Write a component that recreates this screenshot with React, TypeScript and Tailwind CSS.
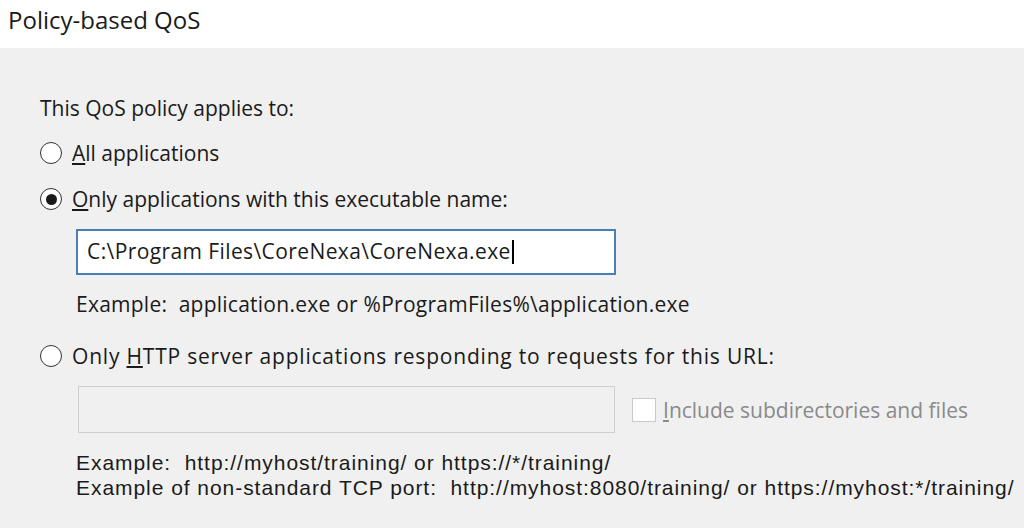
import React from "react";

function Radio({ checked }: { checked?: boolean }) {
  return (
    <span className="flex h-[22px] w-[22px] shrink-0 items-center justify-center rounded-full border-[1.5px] border-[#333] bg-white">
      {checked && <span className="h-[11px] w-[11px] rounded-full bg-[#1a1a1a]" />}
    </span>
  );
}

export default function App() {
  return (
    <div className="flex h-[528px] w-[1024px] flex-col overflow-hidden bg-[#f0f0f0] text-[21px] text-[#1a1a1a] [font-family:'Open_Sans',sans-serif]">
      <div className="flex h-[48px] items-center bg-white pl-[8px] pb-[8px] text-[24px] text-[#1a1a1a]">
        Policy-based QoS
      </div>
      <div className="flex flex-col pl-[40px] pt-[46px]">
        <div className="leading-[28px]">This QoS policy applies to:</div>
        <div className="mt-[17px] flex items-center gap-[10px]">
          <Radio />
          <span className="leading-[28px]"><span className="underline underline-offset-2">A</span>ll applications</span>
        </div>
        <div className="mt-[18px] flex items-center gap-[10px]">
          <Radio checked />
          <span className="leading-[28px]"><span className="underline underline-offset-2">O</span>nly applications with this executable name:</span>
        </div>
        <div className="ml-[36px] mt-[16px] flex h-[46px] w-[540px] items-center border-2 border-[#4a7fb3] bg-white pl-[9px]">
          <span className="tracking-[0.4px]">C:\Program Files\CoreNexa\CoreNexa.exe</span>
          <span className="ml-[1px] h-[24px] w-[2px] bg-black" />
        </div>
        <div className="ml-[36px] mt-[15px] leading-[28px] tracking-[0.25px]">Example:&nbsp; application.exe or %ProgramFiles%\application.exe</div>
        <div className="mt-[24px] flex items-center gap-[10px]">
          <Radio />
          <span className="leading-[28px] tracking-[0.8px]">Only <span className="underline underline-offset-2">H</span>TTP server applications responding to requests for this URL:</span>
        </div>
        <div className="ml-[38px] mt-[16px] flex items-center">
          <div className="h-[47px] w-[537px] border border-[#cfcfcf] bg-[#f0f0f0]" />
          <div className="ml-[17px] h-[24px] w-[24px] border border-[#c8c8c8] bg-white" />
          <span className="ml-[7px] leading-[28px] text-[#8a8a8a]"><span className="underline underline-offset-2">I</span>nclude subdirectories and files</span>
        </div>
        <div className="ml-[36px] mt-[17px] flex flex-col text-[21px] leading-[25px] tracking-[0.95px] [font-family:'Liberation_Sans',sans-serif]">
          <div>Example:&nbsp; http://myhost/training/ or https://*/training/</div>
          <div>Example of non-standard TCP port:&nbsp; http://myhost:8080/training/ or https://myhost:*/training/</div>
        </div>
      </div>
    </div>
  );
}
